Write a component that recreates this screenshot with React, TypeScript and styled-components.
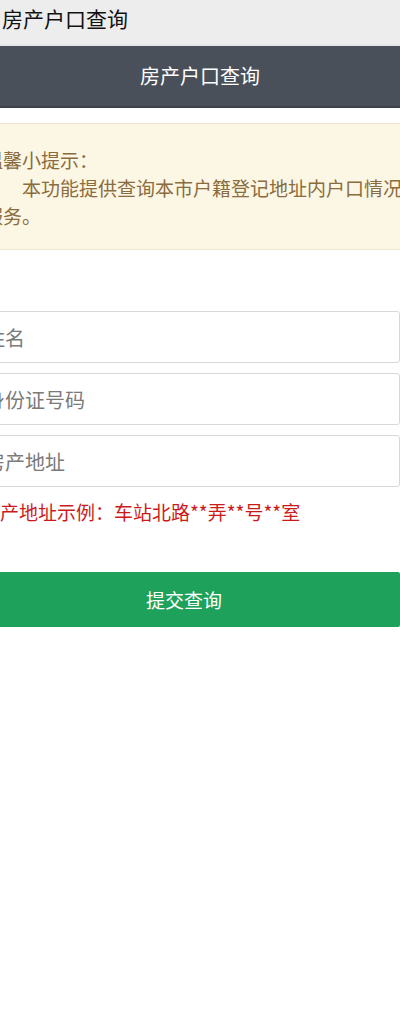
import React from "react";
import styled, { createGlobalStyle } from "styled-components";

const GlobalStyle = createGlobalStyle`
  html, body {
    margin: 0;
    padding: 0;
    background: #ffffff;
    overflow-x: hidden;
  }
  * {
    box-sizing: border-box;
  }
  body {
    font-family: "Noto Sans CJK SC", "Noto Sans", sans-serif;
  }
`;

const Viewport = styled.div`
  width: 400px;
  min-height: 1011px;
  overflow: hidden;
  background: #ffffff;
`;

// the screenshot is cut on its left side, so the page sits 32px out of view
const Page = styled.div`
  width: 464px;
  margin-left: -32px;
`;

const TopBar = styled.div`
  height: 46px;
  background: #ededed;
  border-bottom: 2px solid #e4e6ea;
  padding-left: 34px;
  font-size: 21px;
  line-height: 36px;
  color: #111111;
`;

const Header = styled.div`
  height: 62px;
  background: #4a5059;
  border-bottom: 2px solid #3d424a;
  text-align: center;
  font-size: 20px;
  line-height: 60px;
  color: #ffffff;
`;

const Notice = styled.div`
  margin-top: 15px;
  background: #fcf6e4;
  border-top: 1px solid #efe6cf;
  border-bottom: 1px solid #efe6cf;
  padding: 22px 16px 19px 16px;
  color: #8a6c3e;
  font-size: 19px;
  line-height: 28px;

  h4 {
    margin: 0;
    font-size: inherit;
    font-weight: normal;
  }
  p {
    margin: 0;
    text-indent: 2em;
  }
`;

const Form = styled.form`
  padding: 61px 32px 0 0;
  display: flex;
  flex-direction: column;
`;

const Field = styled.input`
  height: 52px;
  width: 100%;
  margin-bottom: 10px;
  border: 1px solid #d8d8d8;
  border-radius: 3px;
  background: #ffffff;
  padding: 0 16px;
  font-family: inherit;
  font-size: 20px;
  color: #333333;
  outline: none;

  &::placeholder {
    color: #7a7a7a;
  }
`;

const Hint = styled.div`
  margin-top: 2px;
  padding-left: 13px;
  color: #cc1a1a;
  font-size: 19px;
  line-height: 26px;
  white-space: nowrap;
`;

const SubmitButton = styled.button`
  margin-top: 47px;
  height: 55px;
  width: 100%;
  border: none;
  border-radius: 2px;
  background: #1ea15b;
  color: #ffffff;
  font-family: inherit;
  font-size: 19px;
  cursor: pointer;
`;

const App = () => {
    return (
        <Viewport>
            <GlobalStyle />
            <Page>
                <TopBar>房产户口查询</TopBar>
                <Header>房产户口查询</Header>
                <Notice>
                    <h4>温馨小提示：</h4>
                    <p>本功能提供查询本市户籍登记地址内户口情况服务。</p>
                </Notice>
                <Form onSubmit={(e) => e.preventDefault()}>
                    <Field type={"text"} placeholder={"姓名"} />
                    <Field type={"text"} placeholder={"身份证号码"} />
                    <Field type={"text"} placeholder={"房产地址"} />
                    <Hint>房产地址示例：车站北路**弄**号**室</Hint>
                    <SubmitButton type={"submit"}>提交查询</SubmitButton>
                </Form>
            </Page>
        </Viewport>
    );
};

export default App;
